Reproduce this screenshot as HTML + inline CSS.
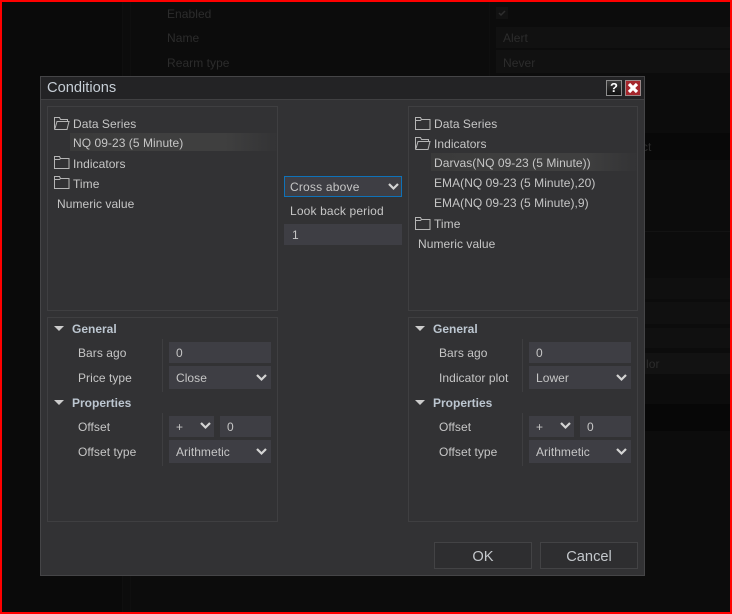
<!DOCTYPE html>
<html><head><meta charset="utf-8"><style>
html,body{margin:0;padding:0;background:#0c0c0c}
#r{position:relative;width:732px;height:614px;overflow:hidden;background:#0c0c0c;font-family:"Liberation Sans",sans-serif;font-size:12px;color:#c6c6c6}
#r div,#r svg{position:absolute}
.t{white-space:nowrap;line-height:16px;height:16px;letter-spacing:.05px}
.bg{color:#2c2c2c}
.p{background:#323234;border:1px solid #3f3f41;box-sizing:border-box}
.f{background:#3e3e44;box-sizing:border-box}
.h{color:#bcc6d0;font-weight:bold;letter-spacing:0}
.sel{background:linear-gradient(90deg,#3a3a3a,#3f3f3f 40%,#3f3f3f 75%,#333335)}
</style></head><body><div id="r">
<!-- background -->
<div style="left:0;top:0;width:122px;height:614px;background:#0a0a0a"></div>
<div style="left:122px;top:0;width:1px;height:614px;background:#0f0f0f"></div>
<div style="left:130px;top:0;width:1px;height:614px;background:#0f0f0f"></div>
<div style="left:489px;top:0;width:1px;height:133px;background:#0f0f0f"></div>
<div style="left:496px;top:27px;width:236px;height:21px;background:#111"></div>
<div style="left:496px;top:50px;width:236px;height:23px;background:#111"></div>
<div style="left:496px;top:7px;width:12px;height:12px;background:#121212"></div>
<svg style="left:498px;top:9px" width="8" height="8"><path d="M1 4l2 2 4-4" stroke="#2e2e2e" stroke-width="1.500" fill="none"/></svg>
<div style="left:130px;top:133px;width:602px;height:27px;background:#080808"></div>
<div style="left:645px;top:231px;width:87px;height:1px;background:#131313"></div>
<div style="left:645px;top:278px;width:87px;height:21px;background:#0f0f0f"></div>
<div style="left:645px;top:302px;width:87px;height:22px;background:#101010"></div>
<div style="left:645px;top:328px;width:87px;height:20px;background:#101010"></div>
<div style="left:645px;top:353px;width:87px;height:21px;background:#121212"></div>
<div style="left:645px;top:404px;width:87px;height:27px;background:#070707"></div>
<div class="t bg" style="left:167px;top:6px">Enabled</div>
<div class="t bg" style="left:167px;top:30px">Name</div>
<div class="t bg" style="left:167px;top:55px">Rearm type</div>
<div class="t bg" style="left:503px;top:30px">Alert</div>
<div class="t bg" style="left:503px;top:55px">Never</div>
<div class="t bg" style="left:642px;top:139px">ct</div>
<div class="t bg" style="left:646px;top:356px">lor</div>
<!-- red frame -->
<div style="left:0;top:0;width:732px;height:614px;box-sizing:border-box;border:2px solid #f00;z-index:9"></div>
<!-- dialog -->
<div style="left:40px;top:76px;width:605px;height:500px;box-sizing:border-box;background:#323234;border:1px solid #454547"></div>
<div style="left:41px;top:77px;width:603px;height:22px;background:#232325;border-bottom:1px solid #404042"></div>
<div class="t" style="left:47px;top:80px;font-size:14.67px;letter-spacing:0;color:#c6ced6">Conditions</div>
<div style="left:606px;top:80px;width:16px;height:16px;box-sizing:border-box;border:1px solid #8d8d8d;background:linear-gradient(#3a3a3a,#111);color:#fff;font-weight:bold;font-size:13px;line-height:14px;text-align:center">?</div>
<div style="left:625px;top:80px;width:16px;height:16px;box-sizing:border-box;border:1px solid #9a8888;background:#a5262c"></div>
<svg style="left:625px;top:80px" width="16" height="16"><path d="M4 4l8 8M12 4l-8 8" stroke="#fff" stroke-width="3.200"/></svg>
<!-- panels -->
<div class="p" style="left:47px;top:106px;width:231px;height:205px"></div>
<div class="p" style="left:47px;top:317px;width:231px;height:205px"></div>
<div class="p" style="left:408px;top:106px;width:230px;height:205px"></div>
<div class="p" style="left:408px;top:317px;width:230px;height:205px"></div>
<!-- left tree -->
<svg style="left:54px;top:116px" width="16" height="14" fill="none" stroke="#b5b5b5"><path d="M.5 13.500V1.500h5l1 2h7v2M.5 13.500h12.500l2-8H3l-2 7"/></svg>
<div class="t" style="left:73px;top:116px">Data Series</div>
<div class="sel" style="left:70px;top:133px;width:207px;height:18px"></div>
<div class="t" style="left:73px;top:135px">NQ 09-23 (5 Minute)</div>
<svg style="left:54px;top:155px" width="16" height="14" fill="none" stroke="#b5b5b5"><path d="M.5 13.500V1.500h5l1 2h8.500v10zM.5 4.500h5l1-1"/></svg>
<div class="t" style="left:73px;top:156px">Indicators</div>
<svg style="left:54px;top:175px" width="16" height="14" fill="none" stroke="#b5b5b5"><path d="M.5 13.500V1.500h5l1 2h8.500v10zM.5 4.500h5l1-1"/></svg>
<div class="t" style="left:73px;top:176px">Time</div>
<div class="t" style="left:57px;top:196px">Numeric value</div>
<!-- middle -->
<div class="f" style="left:284px;top:176px;width:118px;height:21px;border:1px solid #0f72b8"></div>
<div class="t" style="left:290px;top:179px;letter-spacing:.2px">Cross above</div>
<svg style="left:388px;top:183px" width="11" height="8" fill="none" stroke="#d4d4d4" stroke-width="2.200"><path d="M1 1l4.500 4.500L10 1"/></svg>
<div class="t" style="left:290px;top:203px;letter-spacing:.15px">Look back period</div>
<div class="f" style="left:284px;top:224px;width:118px;height:21px"></div>
<div class="t" style="left:292px;top:227px">1</div>
<!-- right tree -->
<svg style="left:415px;top:116px" width="16" height="14" fill="none" stroke="#b5b5b5"><path d="M.5 13.500V1.500h5l1 2h8.500v10zM.5 4.500h5l1-1"/></svg>
<div class="t" style="left:434px;top:116px">Data Series</div>
<svg style="left:415px;top:136px" width="16" height="14" fill="none" stroke="#b5b5b5"><path d="M.5 13.500V1.500h5l1 2h7v2M.5 13.500h12.500l2-8H3l-2 7"/></svg>
<div class="t" style="left:434px;top:136px">Indicators</div>
<div class="sel" style="left:431px;top:153px;width:206px;height:18px"></div>
<div class="t" style="left:434px;top:155px">Darvas(NQ 09-23 (5 Minute))</div>
<div class="t" style="left:434px;top:175px">EMA(NQ 09-23 (5 Minute),20)</div>
<div class="t" style="left:434px;top:195px">EMA(NQ 09-23 (5 Minute),9)</div>
<svg style="left:415px;top:216px" width="16" height="14" fill="none" stroke="#b5b5b5"><path d="M.5 13.500V1.500h5l1 2h8.500v10zM.5 4.500h5l1-1"/></svg>
<div class="t" style="left:434px;top:216px">Time</div>
<div class="t" style="left:418px;top:236px">Numeric value</div>
<!-- left props -->
<svg style="left:54px;top:326px" width="10" height="6"><path d="M0 0h10L5 5z" fill="#ccc"/></svg>
<div class="t h" style="left:72px;top:321px">General</div>
<div style="left:162px;top:339px;width:1px;height:53px;background:#3e3e40"></div>
<div class="t" style="left:78px;top:345px">Bars ago</div>
<div class="f" style="left:169px;top:342px;width:102px;height:21px"></div>
<div class="t" style="left:176px;top:345px">0</div>
<div class="t" style="left:78px;top:370px">Price type</div>
<div class="f" style="left:169px;top:366px;width:102px;height:23px"></div>
<div class="t" style="left:176px;top:370px">Close</div>
<svg style="left:256px;top:374px" width="11" height="8" fill="none" stroke="#d4d4d4" stroke-width="2.200"><path d="M1 1l4.500 4.500L10 1"/></svg>
<svg style="left:54px;top:400px" width="10" height="6"><path d="M0 0h10L5 5z" fill="#ccc"/></svg>
<div class="t h" style="left:72px;top:395px">Properties</div>
<div style="left:162px;top:413px;width:1px;height:53px;background:#3e3e40"></div>
<div class="t" style="left:78px;top:419px">Offset</div>
<div class="f" style="left:169px;top:416px;width:45px;height:21px"></div>
<div class="t" style="left:176px;top:419px">+</div>
<svg style="left:200px;top:422px" width="11" height="8" fill="none" stroke="#d4d4d4" stroke-width="2.200"><path d="M1 1l4.500 4.500L10 1"/></svg>
<div class="f" style="left:220px;top:416px;width:51px;height:21px"></div>
<div class="t" style="left:227px;top:419px">0</div>
<div class="t" style="left:78px;top:444px">Offset type</div>
<div class="f" style="left:169px;top:440px;width:102px;height:23px"></div>
<div class="t" style="left:176px;top:444px">Arithmetic</div>
<svg style="left:256px;top:448px" width="11" height="8" fill="none" stroke="#d4d4d4" stroke-width="2.200"><path d="M1 1l4.500 4.500L10 1"/></svg>
<!-- right props -->
<svg style="left:415px;top:326px" width="10" height="6"><path d="M0 0h10L5 5z" fill="#ccc"/></svg>
<div class="t h" style="left:433px;top:321px">General</div>
<div style="left:522px;top:339px;width:1px;height:53px;background:#3e3e40"></div>
<div class="t" style="left:439px;top:345px">Bars ago</div>
<div class="f" style="left:529px;top:342px;width:102px;height:21px"></div>
<div class="t" style="left:536px;top:345px">0</div>
<div class="t" style="left:439px;top:370px">Indicator plot</div>
<div class="f" style="left:529px;top:366px;width:102px;height:23px"></div>
<div class="t" style="left:536px;top:370px">Lower</div>
<svg style="left:616px;top:374px" width="11" height="8" fill="none" stroke="#d4d4d4" stroke-width="2.200"><path d="M1 1l4.500 4.500L10 1"/></svg>
<svg style="left:415px;top:400px" width="10" height="6"><path d="M0 0h10L5 5z" fill="#ccc"/></svg>
<div class="t h" style="left:433px;top:395px">Properties</div>
<div style="left:522px;top:413px;width:1px;height:53px;background:#3e3e40"></div>
<div class="t" style="left:439px;top:419px">Offset</div>
<div class="f" style="left:529px;top:416px;width:45px;height:21px"></div>
<div class="t" style="left:536px;top:419px">+</div>
<svg style="left:560px;top:422px" width="11" height="8" fill="none" stroke="#d4d4d4" stroke-width="2.200"><path d="M1 1l4.500 4.500L10 1"/></svg>
<div class="f" style="left:580px;top:416px;width:51px;height:21px"></div>
<div class="t" style="left:587px;top:419px">0</div>
<div class="t" style="left:439px;top:444px">Offset type</div>
<div class="f" style="left:529px;top:440px;width:102px;height:23px"></div>
<div class="t" style="left:536px;top:444px">Arithmetic</div>
<svg style="left:616px;top:448px" width="11" height="8" fill="none" stroke="#d4d4d4" stroke-width="2.200"><path d="M1 1l4.500 4.500L10 1"/></svg>
<!-- buttons -->
<div style="left:434px;top:542px;width:98px;height:27px;box-sizing:border-box;background:#2e2e30;border:1px solid #434345;color:#c4c8cc;font-size:14.67px;line-height:28px;text-align:center">OK</div>
<div style="left:540px;top:542px;width:98px;height:27px;box-sizing:border-box;background:#2e2e30;border:1px solid #434345;color:#c4c8cc;font-size:14.67px;line-height:28px;text-align:center">Cancel</div>
</div></body></html>
